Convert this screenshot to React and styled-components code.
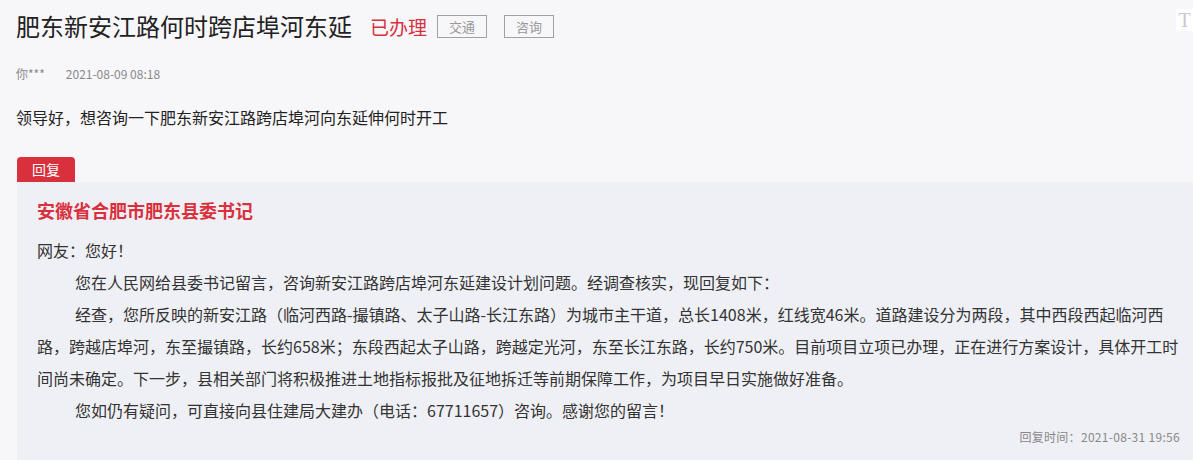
import React from 'react'
import styled, { createGlobalStyle } from 'styled-components'

const GlobalStyle = createGlobalStyle`
    html, body {
        margin: 0;
        padding: 0;
        background: #f7f6f9;
        font-family: "Noto Sans CJK SC", "Noto Sans", sans-serif;
        color: #222;
        overflow: hidden;
    }
`

const reply = {
    author: '安徽省合肥市肥东县委书记',
    greeting: '网友：您好！',
    paragraphs: [
        '您在人民网给县委书记留言，咨询新安江路跨店埠河东延建设计划问题。经调查核实，现回复如下：',
        '经查，您所反映的新安江路（临河西路-撮镇路、太子山路-长江东路）为城市主干道，总长1408米，红线宽46米。道路建设分为两段，其中西段西起临河西路，跨越店埠河，东至撮镇路，长约658米；东段西起太子山路，跨越定光河，东至长江东路，长约750米。目前项目立项已办理，正在进行方案设计，具体开工时间尚未确定。下一步，县相关部门将积极推进土地指标报批及征地拆迁等前期保障工作，为项目早日实施做好准备。',
        '您如仍有疑问，可直接向县住建局大建办（电话：67711657）咨询。感谢您的留言！',
    ],
    time: '回复时间：2021-08-31 19:56',
}

function App() {
    return (
        <Page>
            <GlobalStyle />
            <Header>
                <Title>肥东新安江路何时跨店埠河东延</Title>
                <Status>已办理</Status>
                <Tag>交通</Tag>
                <Tag>咨询</Tag>
            </Header>
            <Meta>
                <span>你***</span>
                <span>2021-08-09 08:18</span>
            </Meta>
            <Question>领导好，想咨询一下肥东新安江路跨店埠河向东延伸何时开工</Question>

            <ReplyTab>回复</ReplyTab>
            <ReplyBox>
                <Author>{reply.author}</Author>
                <Body>
                    <p>{reply.greeting}</p>
                    {reply.paragraphs.map((text, i) => (
                        <Para key={i}>{text}</Para>
                    ))}
                </Body>
                <ReplyTime>{reply.time}</ReplyTime>
            </ReplyBox>

            <FontTool>T</FontTool>
        </Page>
    )
}

export default App

const Page = styled.div`
    position: relative;
    width: 1193px;
    height: 460px;
    padding-left: 16px;
    box-sizing: border-box;
`

const Header = styled.div`
    display: flex;
    align-items: center;
    padding-top: 8px;
    height: 36px;
`

const Title = styled.h1`
    margin: 0;
    font-size: 24px;
    font-weight: 400;
    line-height: 36px;
    color: #222;
`

const Status = styled.span`
    margin-left: 18px;
    font-size: 19px;
    color: #d9303e;
`

const Tag = styled.span`
    margin-left: 10px;
    width: 48px;
    height: 21px;
    border: 1px solid #a0a0a0;
    color: #999;
    font-size: 13px;
    line-height: 21px;
    text-align: center;
    & + & {
        margin-left: 17px;
    }
`

const Meta = styled.div`
    display: flex;
    gap: 21px;
    margin-top: 20px;
    font-size: 12px;
    line-height: 20px;
    color: #888;
`

const Question = styled.p`
    margin: 21px 0 0;
    font-size: 16px;
    line-height: 24px;
    color: #222;
`

const ReplyTab = styled.div`
    margin: 28px 0 0 1px;
    width: 58px;
    height: 25px;
    background: #d9303e;
    border-radius: 4px 4px 0 0;
    color: #fff;
    font-size: 14px;
    line-height: 25px;
    text-align: center;
`

const ReplyBox = styled.div`
    margin-left: 1px;
    height: 290px;
    padding: 14px 13px 0 20px;
    background: #eff0f5;
    box-sizing: border-box;
`

const Author = styled.h2`
    margin: 0;
    font-size: 18px;
    font-weight: 700;
    line-height: 28px;
    color: #d9303e;
`

const Body = styled.div`
    margin-top: 10px;
    font-size: 16px;
    line-height: 32px;
    color: #333;
    p {
        margin: 0;
    }
`

const Para = styled.p`
    text-indent: 38px;
`

const ReplyTime = styled.div`
    margin-top: 2px;
    text-align: right;
    font-size: 12px;
    letter-spacing: 0.3px;
    line-height: 18px;
    color: #888;
`

const FontTool = styled.div`
    position: absolute;
    top: 9px;
    right: 0;
    width: 17px;
    height: 22px;
    background: #fff;
    color: #c8c8c8;
    font-family: "Liberation Serif", serif;
    font-size: 20px;
    line-height: 22px;
    text-align: center;
`
